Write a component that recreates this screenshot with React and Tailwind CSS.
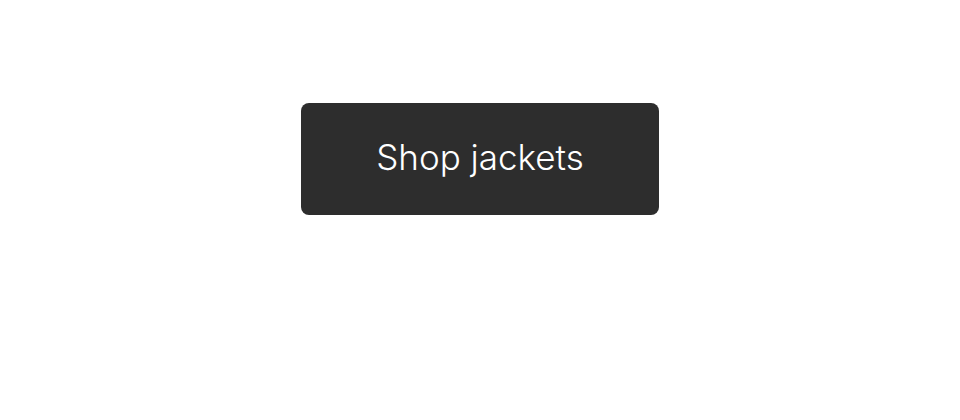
export default function App() {
  return (
    <div className="flex min-h-[420px] w-full justify-center bg-white pt-[103px]" style={{ fontFamily: 'Inter, "Liberation Sans", sans-serif' }}>
      <button
        type="button"
        className="flex h-[112px] w-[358px] items-center justify-center rounded-lg bg-[#2d2d2d] pb-1 text-[35px] font-light tracking-normal text-white"
      >
        Shop jackets
      </button>
    </div>
  );
}
